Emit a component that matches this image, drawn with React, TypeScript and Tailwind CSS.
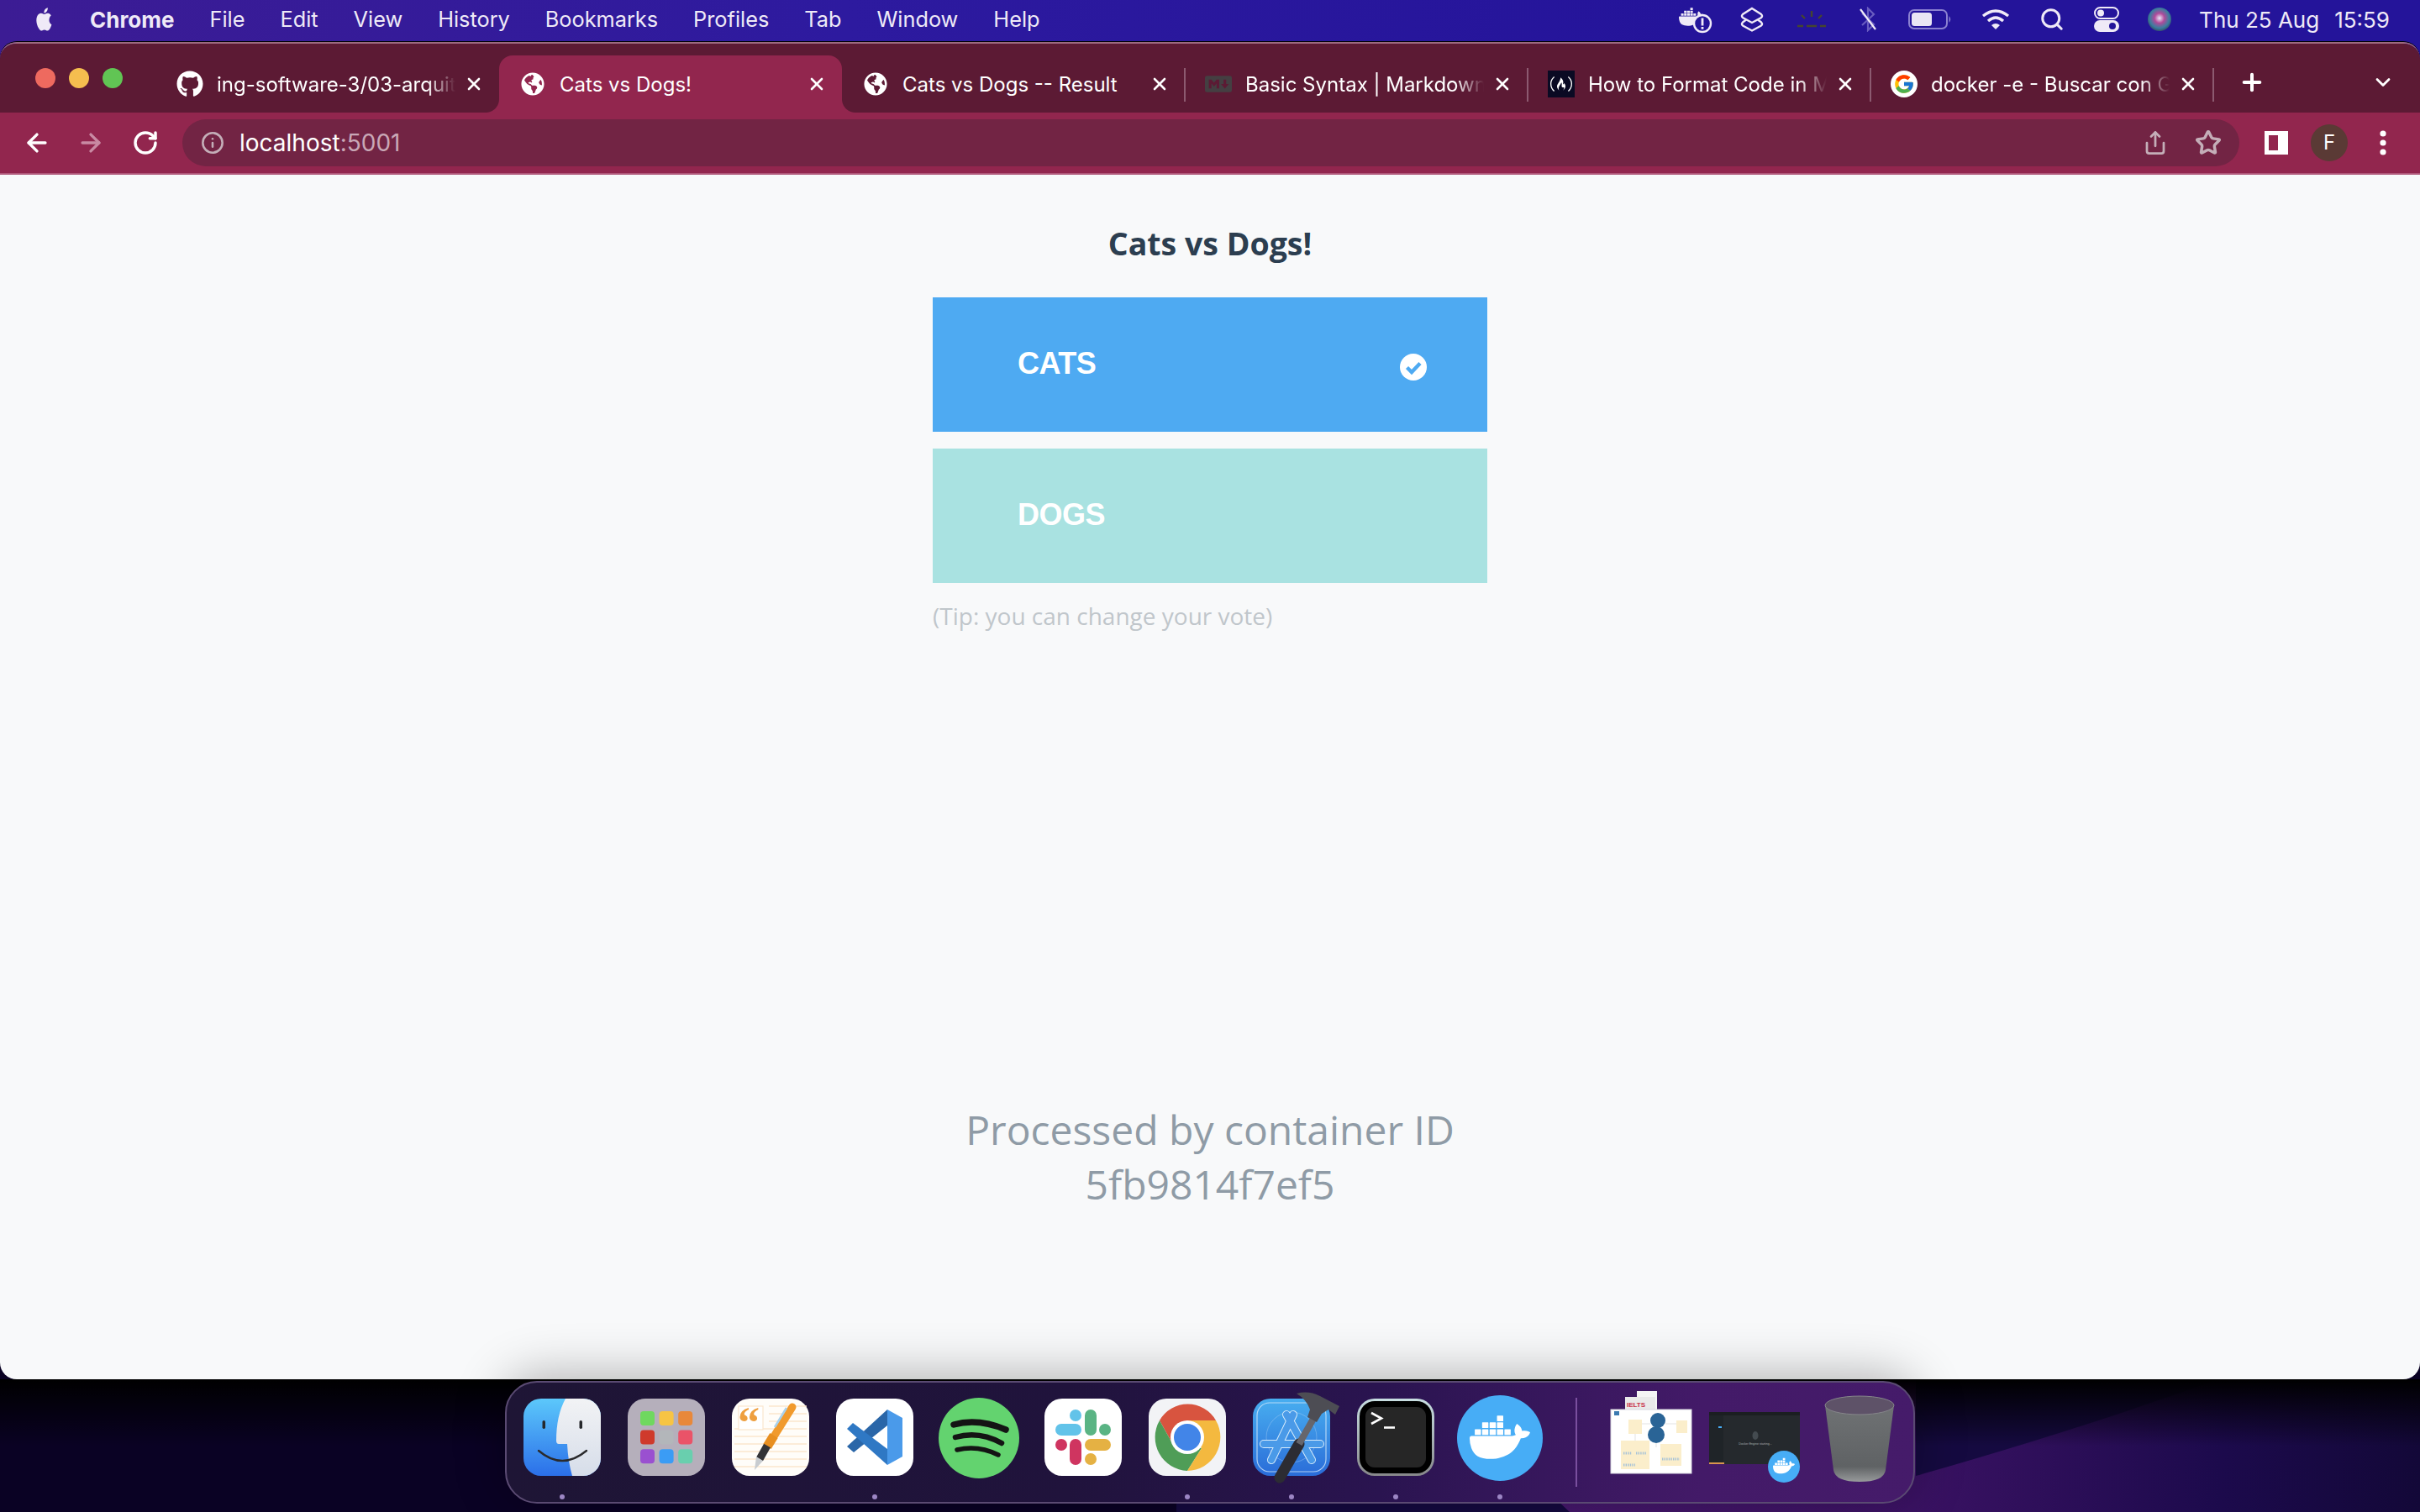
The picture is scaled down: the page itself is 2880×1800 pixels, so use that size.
import React from "react";
import { FaGithub, FaGlobeAmericas } from "react-icons/fa";
import { FcGoogle } from "react-icons/fc";
import { SiDocker, SiFreecodecamp, SiMarkdown } from "react-icons/si";
import { ArrowLeft, ArrowRight, RotateCw, Info, Share, Star, X, Plus, ChevronDown, Search } from "lucide-react";

const menuItems = ["File", "Edit", "View", "History", "Bookmarks", "Profiles", "Tab", "Window", "Help"];

const Globe = () => <FaGlobeAmericas size={28} color="#fff" />;

const tabs = [
  { title: "ing-software-3/03-arquitectura", icon: <FaGithub size={32} color="#fff" />, fade: true },
  { title: "Cats vs Dogs!", icon: <Globe />, active: true },
  { title: "Cats vs Dogs -- Result", icon: <Globe /> },
  { title: "Basic Syntax | Markdown Guide", icon: <SiMarkdown size={32} color="#443f42" />, fade: true },
  {
    title: "How to Format Code in Markdown",
    icon: (
      <span className="flex h-8 w-8 items-center justify-center bg-[#0a0a23]">
        <SiFreecodecamp size={26} color="#fff" />
      </span>
    ),
    fade: true,
  },
  {
    title: "docker -e - Buscar con Google",
    icon: (
      <span className="flex h-8 w-8 items-center justify-center rounded-full bg-white">
        <FcGoogle size={26} />
      </span>
    ),
    fade: true,
  },
];

function AppleLogo() {
  return (
    <svg width="26" height="32" viewBox="0 0 24 24" fill="#efeaf7" preserveAspectRatio="none">
      <path d="M17.05 12.54c-.03-2.6 2.12-3.85 2.22-3.91-1.21-1.77-3.09-2.01-3.76-2.04-1.6-.16-3.12.94-3.93.94-.81 0-2.06-.92-3.39-.89-1.74.03-3.35 1.01-4.25 2.57-1.81 3.14-.46 7.8 1.3 10.35.86 1.25 1.89 2.65 3.24 2.6 1.3-.05 1.79-.84 3.36-.84 1.57 0 2.01.84 3.39.81 1.4-.02 2.28-1.27 3.14-2.53.99-1.45 1.4-2.86 1.42-2.93-.03-.01-2.72-1.04-2.75-4.13zM14.46 4.9c.72-.87 1.2-2.08 1.07-3.28-1.03.04-2.28.69-3.02 1.56-.66.77-1.24 2-1.09 3.18 1.15.09 2.32-.58 3.04-1.46z" />
    </svg>
  );
}

function StatusIcons() {
  return (
    <div className="flex items-center">
      <svg width="40" height="36" viewBox="0 0 40 36">
        <SiDocker size={30} color="#efeaf7" x={0} y={0} />
        <circle cx="28" cy="23" r="10" fill="#23149a" stroke="#efeaf7" strokeWidth="2.4" />
        <rect x="26.6" y="16.5" width="2.8" height="9" fill="#efeaf7" />
        <rect x="26.6" y="27" width="2.8" height="2.8" fill="#efeaf7" />
      </svg>
      <svg width="28" height="30" viewBox="0 0 28 30" fill="none" stroke="#efeaf7" strokeWidth="2.4" className="ml-[33px]">
        <path d="M14 2 L25 9 Q27 11 25 13 L14 19 L3 13 Q1 11 3 9 Z" />
        <path d="M7 17 L3 20 Q1 22 3 24 L14 30 L25 24 Q27 22 25 20 L21 17" strokeLinejoin="round" transform="translate(0,-1.5)" />
      </svg>
      <svg width="34" height="22" viewBox="0 0 34 22" stroke="#45452f" strokeWidth="2.4" className="ml-[40px]">
        <path d="M0 19 H7 M11 19 H23 M27 19 H34 M17 1 V8 M5 6 L9 10 M29 6 L25 10" />
      </svg>
      <svg width="22" height="30" viewBox="0 0 22 30" fill="none" stroke="#6a5dc0" strokeWidth="2.2" className="ml-[39px]">
        <path d="M4 8 L18 21 L11 28 V2 L18 9 L4 22" />
        <path d="M2 3 L20 27" stroke="#efeaf7" />
      </svg>
      <svg width="52" height="24" viewBox="0 0 52 24" className="ml-[37px]">
        <rect x="1" y="1" width="45" height="22" rx="6" fill="none" stroke="#8a80d0" strokeWidth="2" />
        <rect x="4" y="4" width="24" height="16" rx="3.5" fill="#e9e6f4" />
        <path d="M48.5 8 Q52 12 48.5 16 Z" fill="#8a80d0" />
      </svg>
      <svg width="34" height="26" viewBox="0 0 34 26" fill="none" stroke="#efeaf7" strokeWidth="3.4" className="ml-[35px]">
        <path d="M2 9 Q17 -3 32 9" />
        <path d="M8 15 Q17 7 26 15" />
        <path d="M17 25 L12 20 Q17 16 22 20 Z" fill="#efeaf7" stroke="none" />
      </svg>
      <Search size={30} color="#efeaf7" strokeWidth={2.4} className="ml-[35px]" />
      <svg width="30" height="30" viewBox="0 0 30 30" className="ml-[35px]">
        <rect x="1" y="1" width="28" height="13" rx="6.5" fill="none" stroke="#efeaf7" strokeWidth="2" />
        <circle cx="8" cy="7.5" r="4" fill="#efeaf7" />
        <rect x="0" y="16" width="30" height="14" rx="7" fill="#efeaf7" />
        <circle cx="22" cy="23" r="4" fill="#23149a" />
      </svg>
      <svg width="28" height="28" viewBox="0 0 28 28" className="ml-[34px]">
        <defs>
          <radialGradient id="siri" cx="50%" cy="45%" r="60%">
            <stop offset="0" stopColor="#e8e8f8" />
            <stop offset="0.35" stopColor="#b04a9a" />
            <stop offset="0.7" stopColor="#3a7ea0" />
            <stop offset="1" stopColor="#33405a" />
          </radialGradient>
        </defs>
        <circle cx="14" cy="14" r="14" fill="url(#siri)" />
      </svg>
    </div>
  );
}

function TrafficLights() {
  return (
    <div className="flex w-[186px] shrink-0 gap-4 pl-[42px] pt-[15px]">
      <span className="h-6 w-6 rounded-full bg-[#ee6a5f]" />
      <span className="h-6 w-6 rounded-full bg-[#f5be4f]" />
      <span className="h-6 w-6 rounded-full bg-[#61c554]" />
    </div>
  );
}

function Tab({ title, icon, active, fade, last }: { title: string; icon: React.ReactNode; active?: boolean; fade?: boolean; last?: boolean }) {
  return (
    <div
      className={
        active
          ? "relative flex h-[68px] w-[408px] shrink-0 items-center rounded-t-[16px] bg-[#92264e] pl-[24px]"
          : "relative flex h-[68px] w-[408px] shrink-0 items-center pl-[24px]"
      }
    >
      {active && (
        <>
          <span className="absolute bottom-0 left-[-16px] h-4 w-4 bg-[radial-gradient(circle_at_0_0,#5c1a34_15.5px,#92264e_16.5px)]" />
          <span className="absolute bottom-0 right-[-16px] h-4 w-4 bg-[radial-gradient(circle_at_100%_0,#5c1a34_15.5px,#92264e_16.5px)]" />
        </>
      )}
      <span className="flex w-8 shrink-0 items-center justify-center">{icon}</span>
      <span
        className={
          fade
            ? "ml-4 w-[284px] overflow-hidden whitespace-nowrap pt-[2px] text-[24px] text-white [mask-image:linear-gradient(to_right,black_88%,transparent)]"
            : "ml-4 w-[284px] overflow-hidden whitespace-nowrap pt-[2px] text-[24px] text-white"
        }
      >
        {title}
      </span>
      <X size={24} color="#fff" strokeWidth={2.6} className="ml-[10px] shrink-0" />
      {!last && !active && <span className="absolute right-[-1px] top-[15px] h-10 w-[2px] bg-[#8c5a70]" />}
    </div>
  );
}

function DockItem({ children, dot }: { children: React.ReactNode; dot?: boolean }) {
  return (
    <div className="flex w-[92px] shrink-0 flex-col items-center">
      <svg width="92" height="92" viewBox="0 0 92 92" className="overflow-visible">
        {children}
      </svg>
      <span className={dot ? "mt-[22px] h-1.5 w-1.5 rounded-full bg-[#9c86c4]" : "mt-[22px] h-1.5 w-1.5"} />
    </div>
  );
}

function Finder() {
  return (
    <>
      <defs>
        <linearGradient id="fb" x1="0" y1="0" x2="0" y2="1">
          <stop offset="0" stopColor="#5cc8fb" />
          <stop offset="1" stopColor="#2b6fe9" />
        </linearGradient>
        <linearGradient id="fw" x1="0" y1="0" x2="0" y2="1">
          <stop offset="0" stopColor="#f2f3f5" />
          <stop offset="1" stopColor="#d6dde9" />
        </linearGradient>
        <clipPath id="fc">
          <rect width="92" height="92" rx="21" />
        </clipPath>
      </defs>
      <g clipPath="url(#fc)">
        <rect width="92" height="92" fill="url(#fb)" />
        <path d="M50 0 Q39 20 39 50 Q39 54 42 54 L52 54 Q53 75 58 92 L92 92 L92 0 Z" fill="url(#fw)" />
      </g>
      <rect x="22.5" y="26" width="3.5" height="10" rx="1.7" fill="#26282c" />
      <rect x="66.5" y="26" width="3.5" height="10" rx="1.7" fill="#26282c" />
      <path d="M18 62 Q46 86 75 62" fill="none" stroke="#2a2a2c" strokeWidth="2.4" strokeLinecap="round" />
    </>
  );
}

function Launchpad() {
  const colors = ["#6fd85f", "#f7c444", "#e8883a", "#cf3a2c", "#b3b6ba", "#ea5368", "#9a50d0", "#3b9cf5", "#69cfae"];
  return (
    <>
      <rect width="92" height="92" rx="21" fill="#b5afbb" />
      {colors.map((c, i) => (
        <rect key={c} x={15 + (i % 3) * 22.6} y={15 + Math.floor(i / 3) * 22.6} width="17" height="17" rx="4" fill={c} />
      ))}
    </>
  );
}

function Pages() {
  return (
    <>
      <rect width="92" height="92" rx="21" fill="#fffdf9" />
      {[9, 18, 27, 36, 45, 54, 63, 72, 81].map((y) => (
        <path key={y} d={`M${y < 36 ? 44 : 3} ${y} H89`} stroke="#fbe6cd" strokeWidth="1.4" />
      ))}
      <rect x="8" y="9" width="29" height="28" fill="#fff" stroke="#fbe6cd" strokeWidth="1.2" />
      <text x="7" y="46" fontFamily="'Liberation Serif', serif" fontSize="52" fontWeight="700" fill="#ee9f3f">
        “
      </text>
      <path d="M72 10 L50 45" stroke="#f19a2c" strokeWidth="9" strokeLinecap="round" />
      <path d="M50 44 L42 57" stroke="#e88f20" strokeWidth="11" />
      <path d="M42 56 L33 72" stroke="#333336" strokeWidth="9" />
      <path d="M29 69 L37 74 L27 85 Z" fill="#c8ccd0" />
      <path d="M65 11 L51 34" stroke="#a9d1ec" strokeWidth="2.5" />
    </>
  );
}

function VSCode() {
  return (
    <>
      <rect width="92" height="92" rx="21" fill="#fff" />
      <path d="M61 13 L61 32 L21 64 L13 57 Z" fill="#2a66a8" />
      <path d="M13 36 L20 29 L61 60 L61 79 Z" fill="#2f78c4" />
      <path d="M61 13 L79 23 L79 69 L61 79 Z" fill="#4a9aea" />
    </>
  );
}

function Spotify() {
  return (
    <>
      <circle cx="46" cy="47" r="48" fill="#63d36f" />
      <g fill="none" stroke="#141414" strokeLinecap="round">
        <path d="M16 31 Q45 23 78 37" strokeWidth="7.5" />
        <path d="M18 46 Q46 38 73 53" strokeWidth="6.5" />
        <path d="M20 61 Q45 55 69 67" strokeWidth="5.5" />
      </g>
    </>
  );
}

function Slack() {
  return (
    <>
      <rect width="92" height="92" rx="21" fill="#fff" />
      <rect x="13" y="30" width="31" height="14" rx="7" fill="#62c3e9" />
      <rect x="30" y="13" width="14" height="14" rx="7" fill="#62c3e9" />
      <rect x="48" y="13" width="14" height="31" rx="7" fill="#5ab484" />
      <rect x="65" y="30" width="14" height="14" rx="7" fill="#5ab484" />
      <rect x="13" y="48" width="14" height="14" rx="7" fill="#cf3560" />
      <rect x="30" y="48" width="14" height="31" rx="7" fill="#cf3560" />
      <rect x="48" y="48" width="31" height="14" rx="7" fill="#e5b143" />
      <rect x="48" y="65" width="14" height="14" rx="7" fill="#e5b143" />
    </>
  );
}

function ChromeIcon() {
  return (
    <>
      <rect width="92" height="92" rx="21" fill="#f2f3f6" />
      <path d="M13 26 A38.6 38.6 0 0 1 80 26 L46 26 L28 53 Z" fill="#d8543f" />
      <path d="M13 26 A40 40 0 0 0 46 86 L63 59 L28 53 Z" fill="#4f9d57" />
      <path d="M80 26 A40 40 0 0 1 46 86 L63 59 L46 46 L46 26 Z" fill="#f4b93f" />
      <circle cx="46" cy="46" r="20" fill="#fff" />
      <circle cx="46" cy="46" r="16" fill="#4285e8" />
    </>
  );
}

function Xcode() {
  return (
    <>
      <defs>
        <linearGradient id="xb" x1="0" y1="0" x2="0" y2="1">
          <stop offset="0" stopColor="#48aef0" />
          <stop offset="1" stopColor="#2a6cd8" />
        </linearGradient>
      </defs>
      <rect width="92" height="92" rx="21" fill="url(#xb)" />
      <rect x="5" y="5" width="82" height="82" rx="15" fill="none" stroke="#cfe6fa" strokeWidth="1.2" opacity="0.8" />
      <circle cx="46" cy="46" r="30" fill="none" stroke="#cfe6fa" strokeWidth="1" opacity="0.3" />
      <g strokeLinecap="round">
        <path d="M48 19 L22 73 M40 19 L70 73 M13 54 L80 54" stroke="#d8ecfb" strokeWidth="10" />
        <path d="M48 19 L22 73 M40 19 L70 73 M13 54 L80 54" stroke="#4a9ae8" strokeWidth="8" />
      </g>
      <path d="M32 94 L55 54" stroke="#2c2c33" strokeWidth="13" strokeLinecap="round" />
      <path d="M55 54 L72 24" stroke="#66666c" strokeWidth="8" />
      <path d="M52 -6 Q66 -10 80 -3 L103 9 L98 19 L90 13 L82 18 L76 28 L65 22 L68 13 Q64 1 52 -6 Z" fill="#4d4d54" />
    </>
  );
}

function Terminal() {
  return (
    <>
      <defs>
        <linearGradient id="ts" x1="0" y1="0" x2="0" y2="1">
          <stop offset="0" stopColor="#c9dfe3" />
          <stop offset="1" stopColor="#87888a" />
        </linearGradient>
      </defs>
      <rect width="92" height="92" rx="21" fill="url(#ts)" />
      <rect x="3" y="3" width="86" height="86" rx="18" fill="#000" />
      <rect x="10" y="10" width="72" height="72" rx="11" fill="#262626" />
      <path d="M17 17 L29 23.5 L17 30" fill="none" stroke="#fff" strokeWidth="2.6" />
      <path d="M32 34.5 H45" stroke="#fff" strokeWidth="2.6" />
    </>
  );
}

function DockerIcon() {
  return (
    <>
      <circle cx="46" cy="47" r="51" fill="#47adf6" />
      <SiDocker size={72} color="#fff" x={10} y={10} />
    </>
  );
}

function DocThumb() {
  return (
    <>
      <rect x="30" y="-9" width="24" height="26" fill="#f4f4f4" />
      <rect x="16" y="-2" width="36" height="18" fill="#e9e9e9" />
      <text x="18" y="10" fontFamily="'Liberation Sans', sans-serif" fontSize="8" fontWeight="700" fill="#c8324a">
        IELTS
      </text>
      <rect x="-1" y="13" width="96" height="76" fill="#fff" stroke="#d8d8e0" strokeWidth="1" />
      <rect x="3" y="15" width="6" height="5" fill="#3b7ab0" />
      <rect x="20" y="25" width="16" height="17" fill="#fbeecb" />
      <rect x="77" y="26" width="13" height="15" fill="#fbeecb" />
      <circle cx="55" cy="26" r="9" fill="#2a6496" />
      <circle cx="53" cy="43" r="10" fill="#2a6496" />
      <path d="M36 30 H46 M64 30 H77 M28 42 V50 M53 53 V58" stroke="#dcdcdc" strokeWidth="0.8" fill="none" />
      <rect x="11" y="50" width="34" height="34" fill="#fbeecb" />
      <rect x="58" y="54" width="25" height="26" fill="#fbeecb" />
      <path d="M14 65 H24 M29 65 H41 M60 72 H81 M14 79 H28" stroke="#a6c2d8" strokeWidth="3" strokeDasharray="1.4 1.2" />
    </>
  );
}

function DockerWindow() {
  return (
    <>
      <rect x="-8" y="16" width="108" height="62" fill="#25292d" />
      <rect x="-8" y="16" width="108" height="4" fill="#1b1e21" />
      <rect x="-8" y="20" width="17" height="56" fill="#1f2428" />
      <rect x="-8" y="76" width="18" height="2" fill="#d8964e" />
      <rect x="3" y="33" width="4" height="2" fill="#47adf6" />
      <ellipse cx="47" cy="44" rx="3.5" ry="5" fill="#444b50" />
      <text x="47" y="55" textAnchor="middle" fontFamily="'Liberation Sans', sans-serif" fontSize="3.6" fill="#a8adb0">
        Docker Engine starting...
      </text>
      <circle cx="81" cy="81" r="19" fill="#47adf6" />
      <SiDocker size={26} color="#fff" x={68} y={67} />
    </>
  );
}

function Trash() {
  return (
    <>
      <defs>
        <linearGradient id="tb" x1="0" y1="0" x2="0" y2="1">
          <stop offset="0" stopColor="#6f7274" />
          <stop offset="0.8" stopColor="#5f6264" />
          <stop offset="1" stopColor="#979a9b" />
        </linearGradient>
      </defs>
      <path d="M6 8 L16 85 Q18 99 47 99 Q76 99 78 85 L88 8 Z" fill="url(#tb)" />
      <ellipse cx="47" cy="8" rx="41" ry="11" fill="#5e5268" stroke="#85858a" strokeWidth="1" />
    </>
  );
}

export default function App() {
  return (
    <div className="relative flex h-[1800px] w-[2880px] flex-col overflow-hidden bg-[#0a0224] font-['Inter',sans-serif]">
      <svg className="absolute inset-0" width="2880" height="1800" viewBox="0 0 2880 1800">
        <defs>
          <linearGradient id="mb" x1="0" y1="0" x2="1" y2="0">
            <stop offset="0" stopColor="#3c1c94" />
            <stop offset="0.35" stopColor="#2d1a9f" />
            <stop offset="0.7" stopColor="#24149a" />
            <stop offset="1" stopColor="#24149a" />
          </linearGradient>
          <linearGradient id="pp" x1="0" y1="0" x2="1" y2="0">
            <stop offset="0" stopColor="#4a1a70" />
            <stop offset="0.45" stopColor="#3e1366" />
            <stop offset="0.8" stopColor="#1c0a4c" />
            <stop offset="1" stopColor="#130838" />
          </linearGradient>
          <linearGradient id="sh" x1="0" y1="0" x2="0" y2="1">
            <stop offset="0" stopColor="#000" stopOpacity="1" />
            <stop offset="1" stopColor="#000" stopOpacity="0" />
          </linearGradient>
        </defs>
        <rect width="2880" height="200" fill="url(#mb)" />
        <rect x="1400" y="1642" width="1480" height="158" fill="#150a40" />
        <path d="M1868 1800 L1700 1642 L2280 1642 L2280 1757 Q2480 1700 2640 1642 L2880 1642 L2880 1800 Z" fill="url(#pp)" />
        <rect y="1642" width="2880" height="80" fill="url(#sh)" />
      </svg>

      <div className="relative flex h-[50px] shrink-0 items-center pb-[4px] text-[#efeaf7]">
        <span className="ml-10 flex w-[26px]">
          <AppleLogo />
        </span>
        <span className="ml-[41px] text-[26px] font-bold">Chrome</span>
        <div className="ml-[42px] flex gap-[42px] text-[25.3px]">
          {menuItems.map((m) => (
            <span key={m}>{m}</span>
          ))}
        </div>
        <div className="ml-auto flex items-center pr-[36px] text-[26px]">
          <StatusIcons />
          <span className="ml-[33px]">Thu 25 Aug</span>
          <span className="ml-[18px]">15:59</span>
        </div>
      </div>

      <div className="relative flex min-h-0 flex-1 flex-col overflow-hidden rounded-[20px] border-t-2 border-[#9c6a80] shadow-[0_-1px_0_#000]">
        <div className="flex h-[82px] shrink-0 items-start bg-[#5c1a34] pt-[14px]">
          <TrafficLights />
          {tabs.map((t, i) => (
            <Tab key={t.title} {...t} last={i === 0} />
          ))}
          <Plus size={32} color="#fff" strokeWidth={3} className="ml-[30px] mt-4" />
          <ChevronDown size={28} color="#fff" strokeWidth={2.4} className="ml-[126px] mt-[18px]" />
        </div>
        <div className="flex h-[74px] shrink-0 items-center border-b-2 border-[#b0587a] bg-[#92264e] pl-[27px] pr-[30px]">
          <ArrowLeft size={34} color="#fff" strokeWidth={2.4} />
          <ArrowRight size={34} color="#c98aa3" strokeWidth={2.4} className="ml-[30px]" />
          <RotateCw size={32} color="#fff" strokeWidth={2.6} className="ml-[32px]" />
          <div className="ml-[28px] flex h-14 w-[2448px] items-center rounded-full bg-[#722444] pl-[22px] pr-[21px]">
            <Info size={28} color="#c4aeb8" strokeWidth={2.2} />
            <span className="ml-[18px] text-[28px] text-white">
              localhost<span className="text-[#c9a7b6]">:5001</span>
            </span>
            <Share size={30} color="#c4aeb8" strokeWidth={2.2} className="ml-auto" />
            <Star size={32} color="#c4aeb8" strokeWidth={2.6} className="ml-[32px]" />
          </div>
          <svg width="28" height="28" viewBox="0 0 28 28" className="ml-[30px]">
            <rect width="28" height="28" fill="#fff" />
            <rect x="5" y="5" width="11" height="18" fill="#92264e" />
          </svg>
          <span className="ml-[27px] flex h-11 w-11 items-center justify-center rounded-full bg-[#5a3a35] text-[24px] text-white">F</span>
          <svg width="8" height="30" viewBox="0 0 8 30" className="ml-[38px]" fill="#fff">
            <circle cx="4" cy="4" r="3.6" />
            <circle cx="4" cy="15" r="3.6" />
            <circle cx="4" cy="26" r="3.6" />
          </svg>
        </div>

        <main className="flex min-h-0 flex-1 flex-col items-center bg-[#f8f9fa] pt-[56px] font-['Open_Sans',sans-serif]">
          <h1 className="text-[37.5px] font-bold leading-[52px] text-[#2c3e50]">Cats vs Dogs!</h1>
          <button className="mt-[38px] flex h-40 w-[660px] items-center justify-between bg-[#4eaaf2] pl-[101px] pr-[72px] font-['Liberation_Sans',sans-serif] text-[36px] font-bold tracking-[-0.5px] text-white">
            <span className="pb-[2px]">CATS</span>
            <svg width="32" height="32" viewBox="0 0 32 32" className="mt-[6px]">
              <circle cx="16" cy="16" r="16" fill="#fff" />
              <path d="M8.5 16.5 L14 22 L24 11.5" fill="none" stroke="#4eaaf2" strokeWidth="4.4" />
            </svg>
          </button>
          <button className="mt-5 flex h-40 w-[660px] items-center bg-[#a9e2e1] pl-[101px] font-['Liberation_Sans',sans-serif] text-[36px] font-bold tracking-[-0.5px] text-white">
            <span className="pb-[2px]">DOGS</span>
          </button>
          <p className="mt-[19px] w-[660px] text-[28px] leading-10 text-[#c0c6cb]">(Tip: you can change your vote)</p>
          <div className="mt-[559px] text-center text-[48px] leading-[65px] text-[#8f9ba6]">
            <p>Processed by container ID</p>
            <p>5fb9814f7ef5</p>
          </div>
        </main>
      </div>

      <div className="relative z-10 mx-auto mb-[10px] mt-[2px] flex h-[146px] w-[1678px] shrink-0 items-start gap-8 rounded-[38px] border-2 border-[#5a4a72] bg-[linear-gradient(to_right,#1e1535_0%,#20133c_40%,#2a1450_62%,#431a68_85%,#451b6a_100%)] pl-[20px] pt-[19px] shadow-[0_-6px_60px_rgba(0,0,0,0.3)]">
        <DockItem dot><Finder /></DockItem>
        <DockItem><Launchpad /></DockItem>
        <DockItem><Pages /></DockItem>
        <DockItem dot><VSCode /></DockItem>
        <DockItem><Spotify /></DockItem>
        <DockItem><Slack /></DockItem>
        <DockItem dot><ChromeIcon /></DockItem>
        <DockItem dot><Xcode /></DockItem>
        <DockItem dot><Terminal /></DockItem>
        <DockItem dot><DockerIcon /></DockItem>
        <span className="ml-3 mr-[9px] mt-[-1px] h-[106px] w-[2px] bg-[#7a4f9e]" />
        <DockItem><DocThumb /></DockItem>
        <DockItem><DockerWindow /></DockItem>
        <DockItem><Trash /></DockItem>
      </div>
    </div>
  );
}
